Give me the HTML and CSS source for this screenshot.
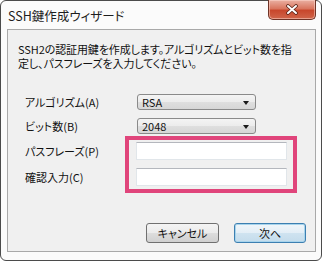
FILE: index.html
```html
<!DOCTYPE html>
<html lang="ja">
<head>
    <meta charset="UTF-8">
    <title>SSH鍵作成ウィザード</title>
    <link rel="stylesheet" href="styles.css">
</head>
<body>
    <div class="window">
        <div class="titlebar">
            <span class="title">SSH鍵作成ウィザード</span>
            <div class="close">
                <svg width="14" height="11" viewBox="0 0 14 11">
                    <path d="M3 2 L11 9 M11 2 L3 9" stroke="#5a2418" stroke-width="3.6" stroke-linecap="round"/>
                    <path d="M3 2 L11 9 M11 2 L3 9" stroke="#ffffff" stroke-width="2" stroke-linecap="round"/>
                </svg>
            </div>
        </div>
        <div class="client">
            <p class="desc">SSH2の認証用鍵を作成します。アルゴリズムとビット数を指</p>
            <p class="desc">定し、パスフレーズを入力してください。</p>
            <div class="form">
                <label class="label">アルゴリズム(A)</label>
                <div class="combo"><span>RSA</span><span class="arrow"></span></div>
                <label class="label">ビット数(B)</label>
                <div class="combo"><span>2048</span><span class="arrow"></span></div>
                <label class="label">パスフレーズ(P)</label>
                <input class="text" type="password">
                <label class="label">確認入力(C)</label>
                <input class="text" type="password">
                <div class="highlight"></div>
            </div>
            <div class="buttons">
                <button class="btn">キャンセル</button>
                <button class="btn default">次へ</button>
            </div>
        </div>
    </div>
</body>
</html>
```

FILE: styles.css
```css
* {
    margin: 0;
    padding: 0;
    box-sizing: border-box;
    font-family: "Noto Sans CJK JP", sans-serif;
    font-feature-settings: "palt";
}

body {
    width: 322px;
    height: 261px;
    background: #ffffff;
}

.window {
    width: 322px;
    height: 261px;
    display: flex;
    flex-direction: column;
    background: #fbfbfb;
    border: 1px solid #4b4b4b;
    border-radius: 6px;
}

.titlebar {
    height: 28px;
    display: flex;
    justify-content: space-between;
    align-items: flex-start;
    padding-left: 7px;
    padding-right: 5px;
}

.title {
    font-size: 12.5px;
    line-height: 13px;
    margin-top: 8px;
    color: #1e1e1e;
}

.close {
    width: 48px;
    height: 20px;
    margin-top: -1px;
    display: flex;
    align-items: center;
    justify-content: center;
    border: 1px solid #6e3326;
    border-top: none;
    border-radius: 0 0 5px 5px;
    background: linear-gradient(#eab0a2, #d9765f 45%, #c8472c 55%, #d0654a);
    box-shadow: inset 0 0 0 1px rgba(255, 220, 210, 0.5);
}

.client {
    flex: 1;
    display: flex;
    flex-direction: column;
    margin: 0 5px 8px 6px;
    padding: 12px 9px 8px 10px;
    background: #f0f0f0;
    border: 1px solid #a9a9a9;
}

.desc {
    font-size: 11px;
    line-height: 15px;
    height: 14px;
    white-space: nowrap;
    letter-spacing: -0.1px;
    color: #111;
}

.form {
    position: relative;
    display: grid;
    grid-template-columns: 112px auto;
    align-items: center;
    margin-top: 24px;
    margin-left: 7px;
    row-gap: 8px;
}

.label {
    font-size: 11px;
    line-height: 14px;
    color: #111;
}

.combo {
    width: 119px;
    height: 16px;
    display: flex;
    align-items: center;
    justify-content: space-between;
    padding: 0 6px 0 4px;
    font-size: 11px;
    color: #111;
    border: 1px solid #8a8a8a;
    border-radius: 3px;
    background: linear-gradient(#f4f4f4, #ececec 50%, #dfdfdf 51%, #d6d6d6);
}

.arrow {
    width: 0;
    height: 0;
    margin-top: 2px;
    border-left: 3.5px solid transparent;
    border-right: 3.5px solid transparent;
    border-top: 4px solid #1a1a1a;
}

.text {
    width: 151px;
    height: 18px;
    margin-left: -1px;
    background: #ffffff;
    border: 1px solid #e1e6ea;
    border-top-color: #b4b7bd;
    outline: none;
}

.text + .label {
    margin-top: -1px;
}

.highlight {
    position: absolute;
    left: 100px;
    top: 42px;
    width: 172px;
    height: 57px;
    border: 4px solid #e0457b;
}

.buttons {
    margin-top: auto;
    display: flex;
    justify-content: flex-end;
    gap: 15px;
}

.btn {
    width: 73px;
    height: 20px;
    font-size: 11px;
    color: #111;
    border: 1px solid #707070;
    border-radius: 3px;
    background: linear-gradient(#f4f4f4, #ebebeb 50%, #dddddd 51%, #d0d0d0);
}

.default {
    width: 72px;
    border-color: #3c7fb1;
    background: linear-gradient(#f0f6fa, #e3eef6 50%, #cfe3f0 51%, #c4dcec);
    box-shadow: inset 0 0 0 1px #a8d4ec;
}
```
